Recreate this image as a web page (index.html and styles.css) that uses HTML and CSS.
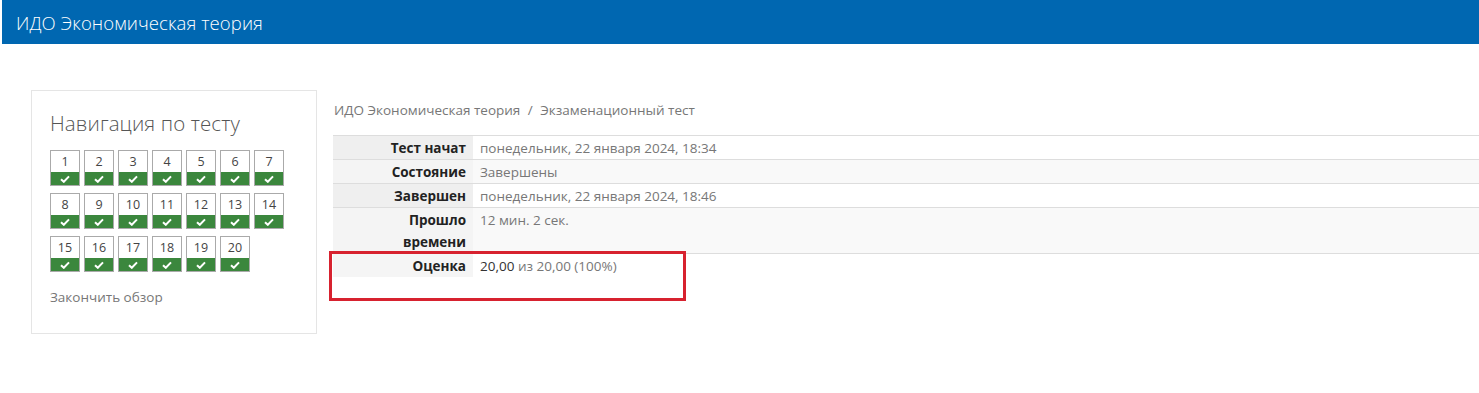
FILE: index.html
```html
<!DOCTYPE html>
<html lang="ru">
<head>
  <meta charset="UTF-8" />
  <title>ИДО Экономическая теория</title>
  <link rel="stylesheet" href="styles.css">
</head>
<body>
  <header class="topbar">
    <span class="brand">ИДО Экономическая теория</span>
  </header>

  <div class="page">
    <aside class="block">
      <h2>Навигация по тесту</h2>
      <div class="qnav" id="qnav"></div>
      <a class="finish" href="#">Закончить обзор</a>
    </aside>

    <main class="content">
      <nav class="crumbs">ИДО Экономическая теория <span class="sep">/</span> Экзаменационный тест</nav>
      <div class="summary-wrap">
        <table class="summary">
          <tr><th>Тест начат</th><td>понедельник, 22 января 2024, 18:34</td></tr>
          <tr><th>Состояние</th><td>Завершены</td></tr>
          <tr><th>Завершен</th><td>понедельник, 22 января 2024, 18:46</td></tr>
          <tr><th>Прошло<br>времени</th><td>12 мин. 2 сек.</td></tr>
          <tr class="last"><th>Оценка</th><td><b class="grade">20,00</b> из 20,00 (<b class="pct">100</b>%)</td></tr>
        </table>
        <div class="mark"></div>
      </div>
    </main>
  </div>

  <script>
    const qnav = document.getElementById("qnav");
    for (let i = 1; i <= 20; i++) {
      const a = document.createElement("a");
      a.className = "qbtn";
      a.href = "#";
      a.innerHTML = `<span class="num">${i}</span>
        <span class="state"><svg width="10" height="8" viewBox="0 0 10 8"><path d="M1 4.2 L3.8 6.8 L9 1.4" fill="none" stroke="#fff" stroke-width="2"/></svg></span>`;
      qnav.appendChild(a);
    }
  </script>
</body>
</html>
```

FILE: styles.css
```css
body {
  margin: 0;
  font-family: "Open Sans", "Noto Sans", sans-serif;
  font-size: 13.5px;
  color: #333;
  background: #fff;
}
.topbar {
  height: 44px;
  margin-left: 2px;
  background: #0067b1;
  display: flex;
  align-items: center;
  padding-left: 14px;
}
.brand {
  color: #fff;
  font-size: 18.5px;
  font-weight: 300;
  letter-spacing: 0.1px;
}
.page {
  display: flex;
  align-items: flex-start;
  padding: 46px 0 0 31px;
}
.block {
  width: 266px;
  height: 215px;
  flex-shrink: 0;
  border: 1px solid #e5e5e5;
  padding: 14px 0 13px 18px;
  margin-right: 16px;
}
.block h2 {
  margin: 4px 0 13px;
  font-size: 20.5px;
  font-weight: 300;
  color: #555;
  letter-spacing: 0.1px;
}
.qnav {
  display: flex;
  flex-wrap: wrap;
  width: 240px;
  column-gap: 4px;
  row-gap: 7px;
}
.qbtn {
  width: 30px;
  height: 36px;
  display: flex;
  flex-direction: column;
  text-decoration: none;
  border: 1px solid #aaa;
  box-sizing: border-box;
}
.qbtn .num {
  flex: 1;
  text-align: center;
  line-height: 21px;
  color: #444;
  font-size: 12.5px;
  background: #fff;
}
.qbtn .state {
  height: 13px;
  background: #3b873d;
  display: flex;
  align-items: center;
  justify-content: center;
}
.finish {
  display: block;
  margin-top: 16px;
  color: #777;
  text-decoration: none;
  font-size: 13.5px;
}
.content {
  flex: 1;
  padding-top: 11px;
}
.crumbs {
  color: #777;
  font-size: 13.5px;
  margin-left: 1px;
  line-height: 18px;
}
.crumbs .sep {
  margin: 0 4px;
}
.summary-wrap {
  position: relative;
  margin-top: 16px;
}
.summary {
  width: 100%;
  border-collapse: collapse;
  line-height: 22px;
}
.summary th,
.summary td {
  border-top: 1px solid #ddd;
  vertical-align: top;
  padding: 1px 7px 0 7px;
}
.summary th {
  width: 126px;
  text-align: right;
  font-weight: bold;
  color: #222;
  background: #efefef;
}
.summary td {
  color: #777;
  background: #fff;
}
.summary tr:nth-child(even) td {
  background: #f9f9f9;
}
.summary tr:nth-child(even) th {
  background: #f4f4f4;
}
.summary tr.last th,
.summary tr.last td {
  background: #fff;
}
.summary tr.last th {
  background: #f5f5f5;
}
.summary b {
  font-weight: normal;
}
.summary .grade {
  color: #333;
}
.mark {
  position: absolute;
  left: -4px;
  top: 116px;
  width: 351px;
  height: 44px;
  border: 3px solid #d7222f;
}
```
